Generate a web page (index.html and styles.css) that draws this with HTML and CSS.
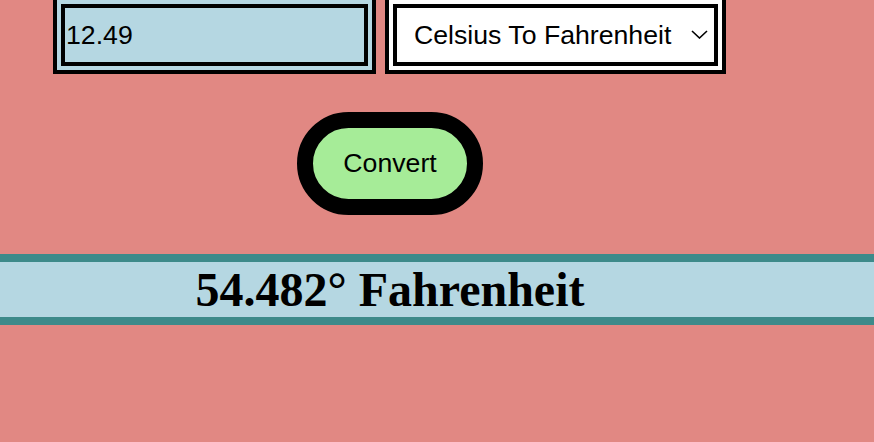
FILE: index.html
```html
<!DOCTYPE html>
<html>
<head>
<meta name="viewport" content="width=device-width, initial-scale=1">
<link rel="stylesheet" href="styles.css">
</head>
<body>

<div class="app">
  <form class="controls">
    <input type="text" id="temp" class="temp-input" value="12.49">
    <div class="picker">
      <select id="mode" class="mode-select">
        <option value="c2f" selected>Celsius To Fahrenheit</option>
        <option value="f2c">Fahrenheit To Celsius</option>
      </select>
      <svg class="chevron" width="17" height="9" viewBox="0 0 17 9">
        <polyline points="1,1 8.5,8 16,1" fill="none" stroke="#000" stroke-width="1.6"/>
      </svg>
    </div>
  </form>

  <div class="actions">
    <button id="convert" class="convert-btn">Convert</button>
  </div>
</div>

<div class="result">
  <h1 id="output" class="result-text">54.482° Fahrenheit</h1>
</div>

<script>
  // convert the typed value with the chosen mode
  document.getElementById("convert").addEventListener("click", function() {
    let value = parseFloat(document.getElementById("temp").value) || 0;
    let mode = document.getElementById("mode").value;
    let text;
    if (mode === "c2f") {
      text = parseFloat((value * 9 / 5 + 32).toFixed(3)) + "° Fahrenheit";
    } else {
      text = parseFloat(((value - 32) * 5 / 9).toFixed(3)) + "° Celsius";
    }
    document.getElementById("output").textContent = text;
  });
</script>
</body>
</html>
```

FILE: styles.css
```css
body, html {
  margin: 0;
  background-color: #e18883;
  font-family: "Liberation Sans", Arial, Helvetica, sans-serif;
}

* {
  box-sizing: border-box;
}

/* everything sits in a 780px column */
.app {
  width: 780px;
}

.controls {
  display: flex;
  justify-content: center;
  gap: 9px;
  margin: -4px 0 0 0;
  padding-right: 1px;
}

.temp-input {
  width: 323px;
  height: 78px;
  padding: 0 1px;
  border: 12px double #000;
  background: #b5d7e2;
  color: #000;
  font-family: "Liberation Sans", Arial, sans-serif;
  font-size: 26.67px;
  outline: none;
}

.picker {
  position: relative;
}

.mode-select {
  appearance: none;
  -webkit-appearance: none;
  width: 341px;
  height: 78px;
  padding: 0 0 0 17px;
  border: 12px double #000;
  border-radius: 0;
  background: #fff;
  color: #000;
  font-family: "Liberation Sans", Arial, sans-serif;
  font-size: 26.67px;
}

.chevron {
  position: absolute;
  right: 18px;
  top: 34px;
  pointer-events: none;
}

.actions {
  display: flex;
  justify-content: center;
  margin-top: 38px;
}

/* pill shaped button */
.convert-btn {
  padding: 20px 30px;
  border: 16px solid #000;
  border-radius: 60px;
  background-color: #a6ec98;
  color: #000;
  font-family: "Liberation Sans", Arial, sans-serif;
  font-size: 26.67px;
  cursor: pointer;
}

.result {
  margin-top: 39px;
  border-top: 8px solid #3d8a8a;
  border-bottom: 8px solid #3d8a8a;
  background-color: #b5d7e2;
}

.result-text {
  width: 780px;
  margin: 0;
  text-align: center;
  font-family: "Liberation Serif", "Times New Roman", serif;
  font-size: 48px;
  line-height: 55px;
}
```
